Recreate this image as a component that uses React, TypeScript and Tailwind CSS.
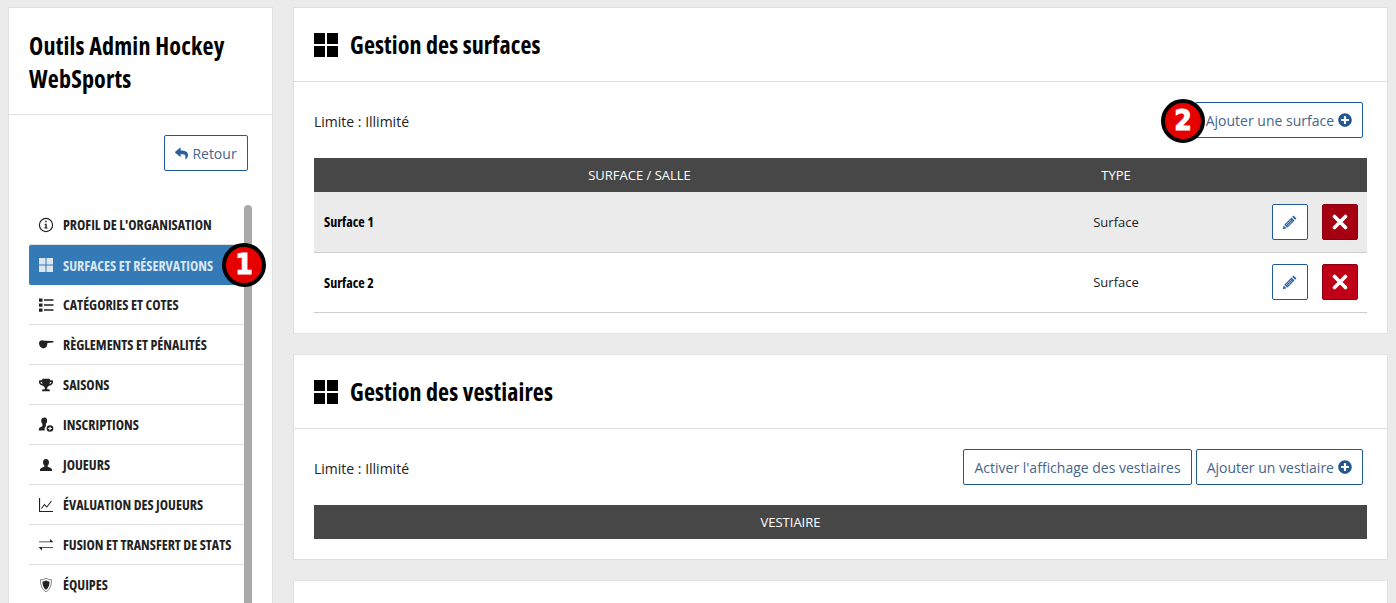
import type { ReactNode } from 'react';
import { FaPlusCircle, FaReply, FaTrophy } from 'react-icons/fa';

function Icon({ children, className }: { children: ReactNode; className?: string }) {
  return (
    <svg viewBox="0 0 16 16" width={16} height={16} fill="currentColor" className={className}>
      {children}
    </svg>
  );
}

const bust = 'M6.5 1c1.9 0 3 1.3 3 3.2 0 1.5-.6 2.8-1.4 3.5v1.1c1.8.5 3.9 1.3 4.4 2.7v1.5H.5v-1.5c.5-1.4 2.6-2.2 4.4-2.7V7.700C4.100 7 3.500 5.700 3.500 4.200 3.500 2.300 4.600 1 6.500 1z';

const menuItems: { label: string; icon: ReactNode; active?: boolean }[] = [
  {
    label: "PROFIL DE L'ORGANISATION",
    icon: (
      <Icon>
        <circle cx="8" cy="8" r="6.6" fill="none" stroke="currentColor" strokeWidth="1.2" />
        <path d="M7.200 3.800h1.500v1.500H7.200zM6.500 6.700h2.200v3.900h.9v1H6.400v-1h.9V7.700h-.8z" />
      </Icon>
    ),
  },
  {
    label: 'SURFACES ET RÉSERVATIONS',
    active: true,
    icon: (
      <Icon>
        <path d="M1 1h6.500v6.500H1zM8.500 1H15v6.500H8.500zM1 8.500h6.500V15H1zM8.500 8.500H15V15H8.500z" />
      </Icon>
    ),
  },
  {
    label: 'CATÉGORIES ET COTES',
    icon: (
      <Icon>
        <path d="M1 1.500h3.500v3.200H1zM1 6.500h3.500v3.200H1zM1 11.500h3.500v3.200H1zM6 2.300h9.500v1.500H6zM6 7.300h9.500v1.500H6zM6 12.300h9.500v1.500H6z" />
      </Icon>
    ),
  },
  {
    label: 'RÈGLEMENTS ET PÉNALITÉS',
    icon: (
      <Icon>
        <path d="M1 6c0-1.700 1.600-2.800 3.200-2.800.9 0 1.500.5 2.500.6l8.300.2c.8 0 .8 1.500 0 1.500l-5.500.4c-.2 1.200-.4 3-1.200 4.100-.8.9-2.200 1.300-3.600 1.200C2.300 10.600 1 8.500 1 6z" />
      </Icon>
    ),
  },
  {
    label: 'SAISONS',
    icon: <FaTrophy size={14} />,
  },
  {
    label: 'INSCRIPTIONS',
    icon: (
      <Icon>
        <path d="M6.500 .5c1.700 0 2.600 1.200 2.600 2.900 0 1.400-.5 2.600-1.200 3.300v2.500C6.800 10 6.500 11 6.700 13.500H.8V12c.5-1.300 2-2.200 3.600-2.700V6.700c-.7-.7-1.200-1.900-1.200-3.300C3.200 1.700 4.800.5 6.500.5z" />
        <circle cx="12" cy="11.500" r="3.300" />
        <path fill="white" d="M11.400 9.700h1.200v1.200h1.200v1.200h-1.200v1.200h-1.200v-1.200h-1.200v-1.200h1.200z" />
      </Icon>
    ),
  },
  {
    label: 'JOUEURS',
    icon: (
      <Icon>
        <path d={bust} transform="translate(1.500 1)" />
      </Icon>
    ),
  },
  {
    label: 'ÉVALUATION DES JOUEURS',
    icon: (
      <Icon>
        <path d="M1 1h1.100v12.900H15V15H1z" />
        <path d="M3.500 11.500l3-4 2.300 2.500 4.700-6" fill="none" stroke="currentColor" strokeWidth="1.100" />
      </Icon>
    ),
  },
  {
    label: 'FUSION ET TRANSFERT DE STATS',
    icon: (
      <Icon>
        <path d="M1 4.500h11V2l3.500 3.200H1zM15 10.800H4V13.500L.5 10h14.500z" />
      </Icon>
    ),
  },
  {
    label: 'ÉQUIPES',
    icon: (
      <Icon>
        <path
          d="M8 1.200c1.800 1.200 3.600 1.500 5.500 1.500 0 5-1 9.500-5.500 12.100C3.500 12.200 2.500 7.700 2.500 2.700c1.900 0 3.700-.3 5.500-1.500z"
          fill="none"
          stroke="currentColor"
          strokeOpacity="0.55"
          strokeWidth="1"
        />
        <path d="M8 3.500c1.200.7 2.300 1 3.500 1.100 0 3.500-.8 6.500-3.500 8.200-2.700-1.700-3.500-4.700-3.500-8.200C5.700 4.500 6.800 4.200 8 3.500z" />
      </Icon>
    ),
  },
];

function Badge({ value, className }: { value: string; className: string }) {
  return (
    <div
      className={`absolute flex h-[44px] w-[44px] items-center justify-center rounded-full border-[4px] border-black bg-[#e60000] text-[28px] font-bold leading-none text-white [-webkit-text-stroke:1px_white] [font-family:'DejaVu_Sans_Condensed','DejaVu_Sans',sans-serif] ${className}`}
    >
      {value}
    </div>
  );
}

function OutlineButton({ children }: { children: ReactNode }) {
  return (
    <button className="flex h-[36px] items-center gap-[4px] rounded-[2px] border border-[#1f5a99] bg-white px-[10px] text-[14px] text-[#46658a]">
      {children}
    </button>
  );
}

function CardTitle({ children }: { children: ReactNode }) {
  return (
    <div className="flex h-[74px] items-center gap-[12px] border-b border-[#e0e0e0] px-[20px]">
      <span className="grid h-[24px] w-[24px] grid-cols-2 gap-[2px]">
        <i className="bg-black" />
        <i className="bg-black" />
        <i className="bg-black" />
        <i className="bg-black" />
      </span>
      <h2 className="text-[24px] font-bold tracking-[0.1px] text-black [font-stretch:75%]">{children}</h2>
    </div>
  );
}

function SurfaceRow({ name, hover }: { name: string; hover?: boolean }) {
  return (
    <div
      className={`grid grid-cols-[651px_302px_1fr] items-center border-b border-[#cccccc] ${hover ? 'h-[61px] bg-[#ebebeb]' : 'h-[60px] bg-white'}`}
    >
      <div className={`pl-[10px] text-[14px] font-bold text-black [font-stretch:75%] ${hover ? 'pb-[2px]' : ''}`}>{name}</div>
      <div className="pt-[1px] text-center text-[13px] text-[#222222]">Surface</div>
      <div className={`flex items-center gap-[14px] pl-[5px] ${hover ? '' : 'pb-[1px]'}`}>
        <button className="flex h-[36px] w-[36px] items-center justify-center rounded-[2px] border border-[#1f5a99] bg-white text-[#2a5f9e]">
          <Icon>
            <path d="M11.500 1.500l3 3-1.300 1.300-3-3zM9.500 3.500l3 3-7.200 7.200-3-3zM1.700 11.500l2.800 2.800-3.800 1z" />
            <path d="M9.300 5.700L4 11M10.500 6.800L5.200 12" stroke="white" strokeWidth="0.6" />
          </Icon>
        </button>
        <button
          className={`flex h-[36px] w-[36px] items-center justify-center rounded-[2px] border border-[#8a0010] text-white ${hover ? 'bg-[#a50011]' : 'bg-[#c00017]'}`}
        >
          <Icon>
            <path d="M2.500 2.500L13.500 13.500M13.500 2.500L2.500 13.500" fill="none" stroke="currentColor" strokeWidth="3.600" strokeLinecap="round" />
          </Icon>
        </button>
      </div>
    </div>
  );
}

export default function App() {
  return (
    <div className="relative flex h-[603px] gap-[20px] overflow-hidden bg-[#ebebeb] pl-[8px] pr-[8px] pt-[7px] [font-family:'Open_Sans',sans-serif]">
      <aside className="h-[700px] w-[265px] shrink-0 border border-[#e0e0e0] bg-white">
        <div className="h-[107px] border-b border-[#e0e0e0] px-[20px] pt-[21px]">
          <h1 className="text-[24px] font-bold leading-[33px] tracking-[0.2px] text-black [font-stretch:75%]">
            Outils Admin Hockey WebSports
          </h1>
        </div>
        <div className="flex justify-end pr-[24px] pt-[20px]">
          <button className="flex h-[36px] w-[84px] items-center justify-center gap-[4px] rounded-[2px] border border-[#1f5a99] bg-white text-[14px] text-[#46658a]">
            <FaReply size={13} className="text-[#2a5f9e]" />
            Retour
          </button>
        </div>
        <div className="relative ml-[20px] mt-[34px] w-[223px]">
          <div className="absolute right-0 top-0 h-[500px] w-[8px] rounded-t-[4px] bg-[#aaaaaa]" />
          <ul className="w-[215px]">
            {menuItems.map((item) => (
              <li
                key={item.label}
                className={`flex h-[40px] items-center gap-[9px] pl-[9px] text-[14px] font-bold [font-stretch:75%] ${
                  item.active
                    ? 'rounded-[2px] bg-[#337ab7] text-[#dbe6f0]'
                    : 'border-b border-[#e0e0e0] text-[#222222]'
                }`}
              >
                <span className="flex w-[16px] shrink-0 justify-center">{item.icon}</span>
                <span>{item.label}</span>
              </li>
            ))}
          </ul>
        </div>
      </aside>
      <main className="flex min-w-0 flex-1 flex-col gap-[20px]">
        <section className="border border-[#e0e0e0] bg-white">
          <CardTitle>Gestion des surfaces</CardTitle>
          <div className="px-[20px] pb-[20px]">
            <div className="flex h-[76px] items-center justify-between pr-[4px]">
              <span className="pt-[2px] text-[14px] text-[#222222]">Limite : Illimité</span>
              <OutlineButton>
                Ajouter une surface
                <FaPlusCircle size={14} className="text-[#23588f]" />
              </OutlineButton>
            </div>
            <div className="grid h-[34px] grid-cols-[651px_302px_1fr] items-center bg-[#474747] pt-[1px] text-center text-[13px] text-white">
              <span>SURFACE / SALLE</span>
              <span>TYPE</span>
            </div>
            <SurfaceRow name="Surface 1" hover />
            <SurfaceRow name="Surface 2" />
          </div>
        </section>
        <section className="border border-[#e0e0e0] bg-white">
          <CardTitle>Gestion des vestiaires</CardTitle>
          <div className="px-[20px] pb-[20px]">
            <div className="flex h-[76px] items-center justify-between pr-[4px]">
              <span className="pt-[2px] text-[14px] text-[#222222]">Limite : Illimité</span>
              <div className="flex gap-[4px]">
                <OutlineButton>Activer l'affichage des vestiaires</OutlineButton>
                <OutlineButton>
                  Ajouter un vestiaire
                  <FaPlusCircle size={14} className="text-[#23588f]" />
                </OutlineButton>
              </div>
            </div>
            <div className="grid h-[34px] grid-cols-[953px_1fr] items-center bg-[#474747] pt-[1px] text-center text-[13px] text-white">
              <span>VESTIAIRE</span>
            </div>
          </div>
        </section>
        <section className="h-[100px] shrink-0 border border-[#e0e0e0] bg-white" />
      </main>
      <Badge value="1" className="left-[222px] top-[243px]" />
      <Badge value="2" className="left-[1161px] top-[99px]" />
    </div>
  );
}
